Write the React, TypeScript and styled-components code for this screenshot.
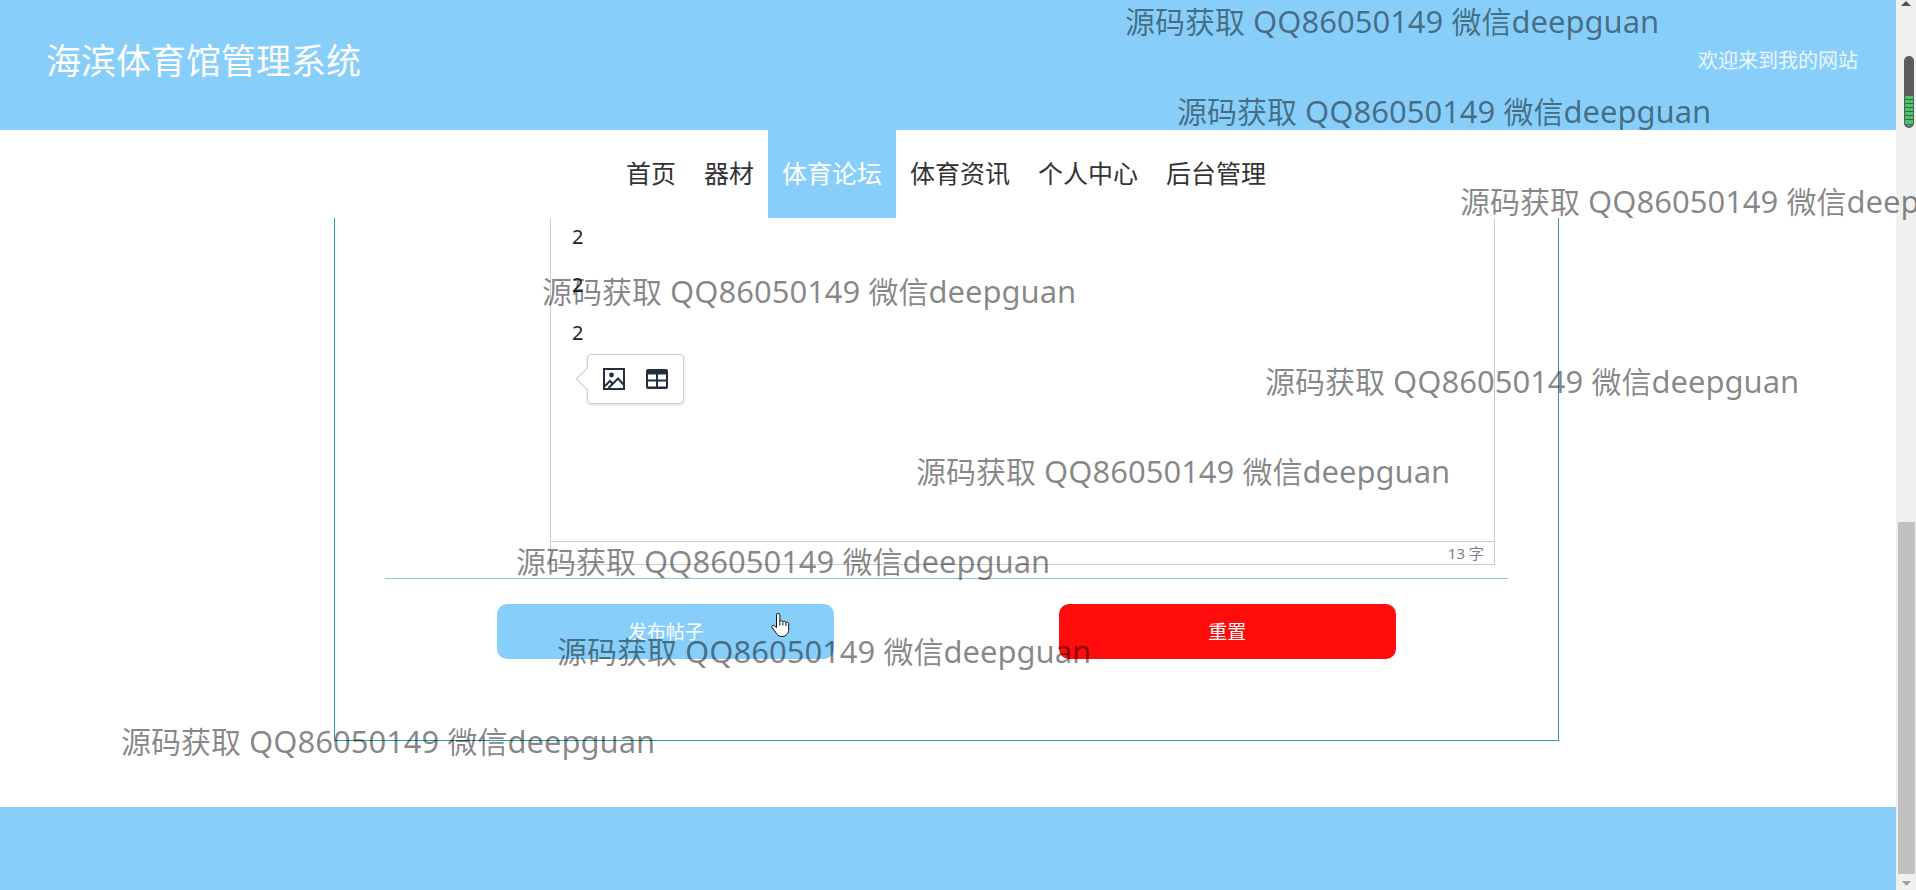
import React from "react";
import styled, { createGlobalStyle } from "styled-components";

const sky = "#87cefa";

const GlobalStyle = createGlobalStyle`
  *, *::before, *::after { box-sizing: border-box; }
  body {
    margin: 0;
    background: #fff;
    color: #333;
    font-family: "Noto Sans", "Noto Sans CJK SC", sans-serif;
  }
  button, textarea { font-family: inherit; }
`;

const Shell = styled.div`
  position: relative;
  display: grid;
  grid-template-columns: 1fr 20px;
  min-height: 100vh;
  overflow: hidden;
`;

const Page = styled.div`
  display: flex;
  flex-direction: column;
`;

const Header = styled.header`
  display: flex;
  align-items: center;
  justify-content: space-between;
  height: 130px;
  padding: 0 38px 8px 46px;
  background: ${sky};
  color: #fff;
`;

const Title = styled.h1`
  margin: 0;
  font-size: 35px;
  font-weight: 400;
  line-height: 48px;
`;

const Welcome = styled.span`
  font-size: 20px;
  line-height: 28px;
  opacity: 0.85;
`;

const Nav = styled.nav`
  position: relative;
  z-index: 1;
  display: flex;
  justify-content: center;
  padding-right: 4px;
  background: #fff;
`;

const NavLink = styled.a<{ $active?: boolean }>`
  padding: 0 14px 2px;
  font-size: 25px;
  line-height: 86px;
  text-decoration: none;
  color: ${(p) => (p.$active ? "#fff" : "#333")};
  background: ${(p) => (p.$active ? sky : "transparent")};
`;

const Main = styled.main`
  display: flex;
  justify-content: center;
  margin-top: -5px;
  padding: 0 3px 66px 0;
`;

const Panel = styled.form`
  width: 64.7%;
  padding: 0 50px 81px;
  border: 1px solid #2a98b0;
  border-top: 0;
`;

const Editor = styled.div`
  position: relative;
  margin: 0 13px 13px 165px;
  border: 1px solid #ccc;
  border-top: 0;
`;

const EditorText = styled.textarea`
  display: block;
  width: 100%;
  height: 328px;
  padding: 0 21px;
  border: 0;
  outline: 0;
  resize: none;
  overflow: hidden;
  background: transparent;
  color: #222;
  font-size: 20px;
  line-height: 48px;
`;

const StatusBar = styled.div`
  padding: 0 10px;
  border-top: 1px solid #ccc;
  color: #7b818c;
  font-size: 15px;
  line-height: 22px;
  text-align: right;
`;

const Bubble = styled.div`
  position: absolute;
  left: 36px;
  top: 141px;
  display: flex;
  align-items: center;
  gap: 19px;
  height: 50px;
  padding: 0 14px;
  border: 1px solid #ccc;
  border-radius: 4px;
  background: #fff;
  box-shadow: 0 1px 3px rgba(0, 0, 0, 0.15);

  &::before {
    content: "";
    position: absolute;
    left: -9px;
    top: 16px;
    width: 16px;
    height: 16px;
    border: 1px solid #ccc;
    border-top: 0;
    border-right: 0;
    background: #fff;
    transform: rotate(45deg);
  }
`;

const IconButton = styled.button`
  position: relative;
  display: flex;
  padding: 0;
  border: 0;
  background: none;
  color: #222f3e;
`;

const Actions = styled.div`
  display: flex;
  justify-content: space-around;
  padding-top: 25px;
  border-top: 1px solid #8fc2d2;
`;

const ActionButton = styled.button<{ $tone: string }>`
  width: 30%;
  height: 55px;
  padding: 0;
  border: 0;
  border-radius: 10px;
  background: ${(p) => p.$tone};
  color: #fff;
  font-size: 19px;
  line-height: 28px;
`;

const Footer = styled.footer`
  flex: 1;
  min-height: 80px;
  background: ${sky};
`;

const ScrollTrack = styled.div`
  display: flex;
  flex-direction: column;
  align-items: center;
  justify-content: space-between;
  background: #f0f0f0;
`;

const ScrollArrow = styled.svg`
  display: block;
  width: 20px;
  height: 16px;
`;

const ScrollSpace = styled.div`
  flex: 506;
`;

const ScrollThumb = styled.div`
  flex: 352;
  width: 17px;
  background: #c1c1c1;
`;

const Meter = styled.svg`
  position: absolute;
  right: 2px;
  top: 56px;
`;

const Pointer = styled.svg`
  position: absolute;
  left: 771px;
  top: 612px;
`;

const Overlay = styled.div`
  position: absolute;
  inset: 0;
  z-index: 2;
  overflow: hidden;
  pointer-events: none;
`;

const Mark = styled.span`
  position: absolute;
  color: rgba(0, 0, 0, 0.48);
  font-size: 30px;
  line-height: 40px;
  white-space: pre;
`;

const Latin = styled.span`
  font-size: 31px;
`;

const links = ["首页", "器材", "体育论坛", "体育资讯", "个人中心", "后台管理"];

const marks = [
  { left: 1125, top: 1 },
  { left: 1177, top: 91 },
  { left: 1460, top: 181 },
  { left: 542, top: 271 },
  { left: 1265, top: 361 },
  { left: 916, top: 451 },
  { left: 516, top: 541 },
  { left: 557, top: 631 },
  { left: 121, top: 721 },
];

const ImageIcon = () => (
  <svg width="24" height="24" viewBox="0 0 24 24" fill="none" stroke="currentColor" strokeWidth="2">
    <path d="M2 2h20v20H2z" />
    <circle cx="9.500" cy="8" r="2.400" fill="currentColor" stroke="none" />
    <path d="M3 19l5-5 3 3 M6.500 21l9.500-9.500 6 6.500" />
  </svg>
);

const TableIcon = () => (
  <svg width="24" height="24" viewBox="0 0 24 24">
    <path
      fill="currentColor"
      fillRule="evenodd"
      d="M3 2h18a2 2 0 0 1 2 2v16a2 2 0 0 1-2 2H3a2 2 0 0 1-2-2V4a2 2 0 0 1 2-2zM3 7.500v5h8v-5zM13 7.500v5h8v-5zM3 14.500v5h8v-5zM13 14.500v5h8v-5z"
    />
  </svg>
);

export default function App() {
  return (
    <Shell>
      <GlobalStyle />
      <Page>
        <Header>
          <Title>海滨体育馆管理系统</Title>
          <Welcome>欢迎来到我的网站</Welcome>
        </Header>
        <Nav>
          {links.map((name) => (
            <NavLink key={name} href="#" $active={name === "体育论坛"}>
              {name}
            </NavLink>
          ))}
        </Nav>
        <Main>
          <Panel onSubmit={(e) => e.preventDefault()}>
            <Editor>
              <EditorText aria-label="正文" spellCheck={false} defaultValue={"2\n2\n2"} />
              <StatusBar>13 字</StatusBar>
              <Bubble>
                <IconButton type="button" aria-label="图片">
                  <ImageIcon />
                </IconButton>
                <IconButton type="button" aria-label="表格">
                  <TableIcon />
                </IconButton>
              </Bubble>
            </Editor>
            <Actions>
              <ActionButton type="submit" $tone={sky}>
                发布帖子
              </ActionButton>
              <ActionButton type="reset" $tone="#ff0c0c">
                重置
              </ActionButton>
            </Actions>
          </Panel>
        </Main>
        <Footer />
      </Page>
      <ScrollTrack aria-hidden>
        <ScrollArrow viewBox="0 0 20 16">
          <path d="M5 6l5-5 5 5z" fill="#505050" />
        </ScrollArrow>
        <ScrollSpace />
        <ScrollThumb />
        <ScrollArrow viewBox="0 0 20 16">
          <path d="M6 7h9l-4.500 5z" fill="#a0a0a0" />
        </ScrollArrow>
      </ScrollTrack>
      <Overlay>
        <Meter width="10" height="72" viewBox="0 0 10 72">
          <rect width="10" height="72" rx="5" fill="#5c5c5c" />
          <rect x="1" y="40" width="8" height="28" fill="#4fc26d" />
          <path d="M1 43.500h8M1 47.500h8M1 51.500h8M1 55.500h8M1 59.500h8M1 63.500h8" stroke="#2f6f41" />
          <path d="M3 69.500h4" stroke="#4fc26d" />
        </Meter>
        {marks.map((m) => (
          <Mark key={m.top} style={m}>
            源码获取<Latin> QQ86050149 </Latin>微信<Latin>deepguan</Latin>
          </Mark>
        ))}
        <Pointer width="19" height="26" viewBox="0 0 19 26">
          <path
            d="M5.500 15.500V3a1.700 1.700 0 0 1 3.400 0v6.500a1.600 1.600 0 0 1 3 .6 1.600 1.600 0 0 1 3 .8 1.500 1.500 0 0 1 2.800.9v5.200c0 4-2 7.500-6.700 7.500-3.500 0-5-2-6.500-4.500L1 15.500c-.8-1.500 1-2.800 2.300-1.700z"
            fill="#fff"
            stroke="#111"
            strokeLinejoin="round"
          />
          <path d="M8.900 9.500v4M11.900 10.500v3M14.900 11v3" stroke="#111" />
        </Pointer>
      </Overlay>
    </Shell>
  );
}
